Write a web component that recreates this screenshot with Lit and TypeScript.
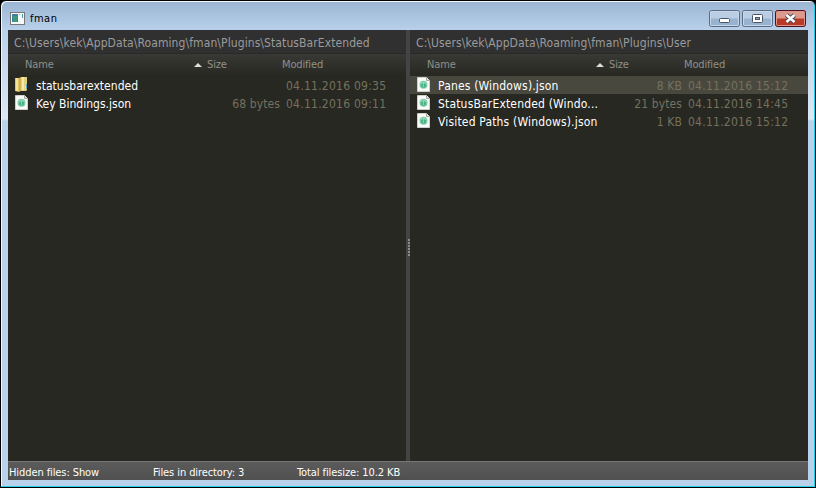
import { LitElement, html, svg, css } from "lit";
import { customElement, property } from "lit/decorators.js";
import { classMap } from "lit/directives/class-map.js";

interface Entry {
  kind: "folder" | "file";
  name: string;
  size: string;
  modified: string;
  selected?: boolean;
}

const folderIcon = html`<svg width="16" height="18" viewBox="0 0 16 18">
  <path d="M1 2h5v13l-1 1-4-1z" fill="#e0c25e"/>
  <path d="M2 2h2v13h-2z" fill="#f4e39a"/>
  <path d="M5 2l2-1v13l-2 2z" fill="#d0b050"/>
  <path d="M7 1h6v13l-1 1h-6l1-2z" fill="#e6d07c"/>
  <path d="M8 1h2v13h-2z" fill="#f5e8a8"/>
  <path d="M12 8h1v5h-1z" fill="#5aa7d8"/>
  <path d="M11 10h1v3h-1z" fill="#cfe8f4"/>
</svg>`;

const fileIcon = html`<svg width="16" height="18" viewBox="0 0 16 18">
  <path d="M2.500 1.500h8l3 3v11h-12v-14z" fill="#fafaf8" stroke="#cfd1cd"/>
  <path d="M10.500 1.500v3h3" fill="#dfe1df" stroke="#a4a6a3"/>
  <circle cx="7.500" cy="8.800" r="4" fill="#7fcfaa"/>
  <circle cx="7.500" cy="9.300" r="2.500" fill="#45b384"/>
  <path d="M5 7.500q2.500-2 5 0M7.500 7v4" fill="none" stroke="#b5e8d1" stroke-width=".6"/>
</svg>`;

@customElement("file-pane")
class FilePane extends LitElement {
  @property() path = "";
  @property({ attribute: false }) entries: Entry[] = [];

  static styles = css`
    :host { display: flex; flex-direction: column; min-width: 0; background: #272822; }
    .path { height: 24px; line-height: 26px; box-sizing: border-box; padding-left: 6px; background: #303030; color: #9b9b9b; font-size: 12px; letter-spacing: 0.09px; border-bottom: 1px solid #292929; white-space: pre; }
    .head { display: grid; grid-template-columns: 182px 92px 1fr; height: 22px; line-height: 21px; background: linear-gradient(#383934, #272822); color: #8f908a; font-size: 11px; letter-spacing: -0.15px; }
    .head .n { padding-left: 17px; display: flex; justify-content: space-between; }
    .arrow { width: 8px; height: 4px; margin: 9px -12px 0 0; }
    .head .s { padding-left: 17px; }
    .row { display: grid; grid-template-columns: 28px 162px 82px 1fr; height: 18px; line-height: 20px; font-size: 12px; color: #75715e; white-space: pre; }
    .row.sel { background: #49483e; }
    .row svg { display: block; margin-left: 6px; }
    .name { color: #fff; letter-spacing: var(--name-spacing, 0); }
    .size { text-align: right; letter-spacing: 0.1px; }
    .date { padding-left: 6px; letter-spacing: 0.25px; }
  `;

  render() {
    return html`
      <div class="path">${this.path}</div>
      <div class="head">
        <span class="n">Name<svg class="arrow" viewBox="0 0 8 4"><path d="M0 4L4 0L8 4z" fill="#ddd"/></svg></span>
        <span class="s">Size</span><span class="m">Modified</span>
      </div>
      ${this.entries.map((e) => html`<div class=${classMap({ row: true, sel: !!e.selected })}>
        ${e.kind === "folder" ? folderIcon : fileIcon}
        <span class="name">${e.name}</span><span class="size">${e.size}</span><span class="date">${e.modified}</span>
      </div>`)}`;
  }
}

@customElement("app-root")
class AppRoot extends LitElement {
  static styles = css`
    :host { display: block; width: 816px; height: 488px; background: #000; font-family: "DejaVu Sans Condensed", "DejaVu Sans", sans-serif; font-stretch: condensed; }
    .win { box-sizing: border-box; width: 816px; height: 488px; border-radius: 6px 6px 0 0; background: linear-gradient(#9ab4d2, #b9d1ea 30px, #dce8f5 118px, #b9d1ea 120px); border: 1px solid #000; padding: 0 7px 7px; box-shadow: inset -1px -1px #20d0e8, inset 1px 1px #f4f8fc; display: flex; flex-direction: column; }
    .title { height: 29px; flex: none; display: flex; align-items: center; font-size: 11px; color: #000; }
    .app { margin: 5px 5px 0 2px; }
    .t { flex: 1; padding-top: 6px; letter-spacing: 0.5px; }
    .btns { display: flex; gap: 2px; margin: 5px 2px 0 0; }
    .main { display: flex; flex: 1; }
    .left { width: 398px; --name-spacing: 0.02px; }
    .right { flex: 1; --name-spacing: 0.17px; }
    .split { width: 4px; background: #444; display: flex; flex-direction: column; justify-content: center; align-items: center; gap: 1px; padding-top: 3px; box-sizing: border-box; }
    .dot { width: 2px; height: 2px; background: #8c8c8c; margin-left: 1px; }
    .status { flex: none; height: 19px; box-sizing: border-box; border-top: 1px solid #777; background: linear-gradient(#5b5b5b, #505050); color: #fff; display: grid; grid-template-columns: 144px 144px 1fr; font-size: 11px; line-height: 21px; letter-spacing: -0.09px; padding-left: 1px; white-space: pre; }
  `;

  left: Entry[] = [
    { kind: "folder", name: "statusbarextended", size: "", modified: "04.11.2016 09:35" },
    { kind: "file", name: "Key Bindings.json", size: "68 bytes", modified: "04.11.2016 09:11" },
  ];
  right: Entry[] = [
    { kind: "file", name: "Panes (Windows).json", size: "8 KB", modified: "04.11.2016 15:12", selected: true },
    { kind: "file", name: "StatusBarExtended (Windo...", size: "21 bytes", modified: "04.11.2016 14:45" },
    { kind: "file", name: "Visited Paths (Windows).json", size: "1 KB", modified: "04.11.2016 15:12" },
  ];

  button(kind: string) {
    const close = kind === "close";
    const glyph = kind === "min"
      ? svg`<rect x="10.500" y="8.500" width="10" height="4" rx="1" fill="#fff" stroke="#4b5567"/>`
      : kind === "max"
      ? svg`<rect x="10.500" y="4.500" width="10" height="8" rx="1" fill="#fff" stroke="#4b5567"/><rect x="13.500" y="7.500" width="4" height="2" fill="#8da8c7" stroke="#4b5567"/>`
      : svg`<path d="M11.500 5l8 7M19.500 5l-8 7" stroke="#4b4b5b" stroke-width="4.500"/><path d="M11.500 5l8 7M19.500 5l-8 7" stroke="#fff" stroke-width="2.500"/>`;
    return html`<svg width="31" height="17" viewBox="0 0 31 17">
      <rect x=".5" y=".5" width="30" height="16" rx="2" fill=${close ? "#b83a26" : "#98b3d0"} stroke=${close ? "#4a1020" : "#5b6b86"}/>
      <rect x="1.500" y="1.500" width="28" height="7" fill=${close ? "#dc9a8c" : "#bacde3"}/>
      <rect x="1.500" y="1.500" width="28" height="14" rx="1" fill="none" stroke=${close ? "#e09588" : "#c8d8ea"}/>
      ${glyph}</svg>`;
  }

  render() {
    return html`<div class="win">
      <div class="title">
        <svg class="app" width="15" height="13" viewBox="0 0 15 13"><rect x=".5" y=".5" width="14" height="12" fill="#f6f8fa" stroke="#777"/><rect x="2" y="2" width="6" height="8" fill="#3f7fa0"/><rect x="3" y="4" width="4" height="6" fill="#3f9a78"/><rect x="9" y="2" width="1" height="1" fill="#8bb"/><rect x="12" y="2" width="1" height="4" fill="#49a"/></svg>
        <span class="t">fman</span>
        <div class="btns">${this.button("min")}${this.button("max")}${this.button("close")}</div>
      </div>
      <div class="main">
        <file-pane class="left" path="C:\\Users\\kek\\AppData\\Roaming\\fman\\Plugins\\StatusBarExtended" .entries=${this.left}></file-pane>
        <div class="split">${[0, 1, 2, 3, 4, 5].map(() => html`<i class="dot"></i>`)}</div>
        <file-pane class="right" path="C:\\Users\\kek\\AppData\\Roaming\\fman\\Plugins\\User" .entries=${this.right}></file-pane>
      </div>
      <div class="status"><span>Hidden files: Show</span><span>Files in directory: 3</span><span>Total filesize: 10.2 KB</span></div>
    </div>`;
  }
}
